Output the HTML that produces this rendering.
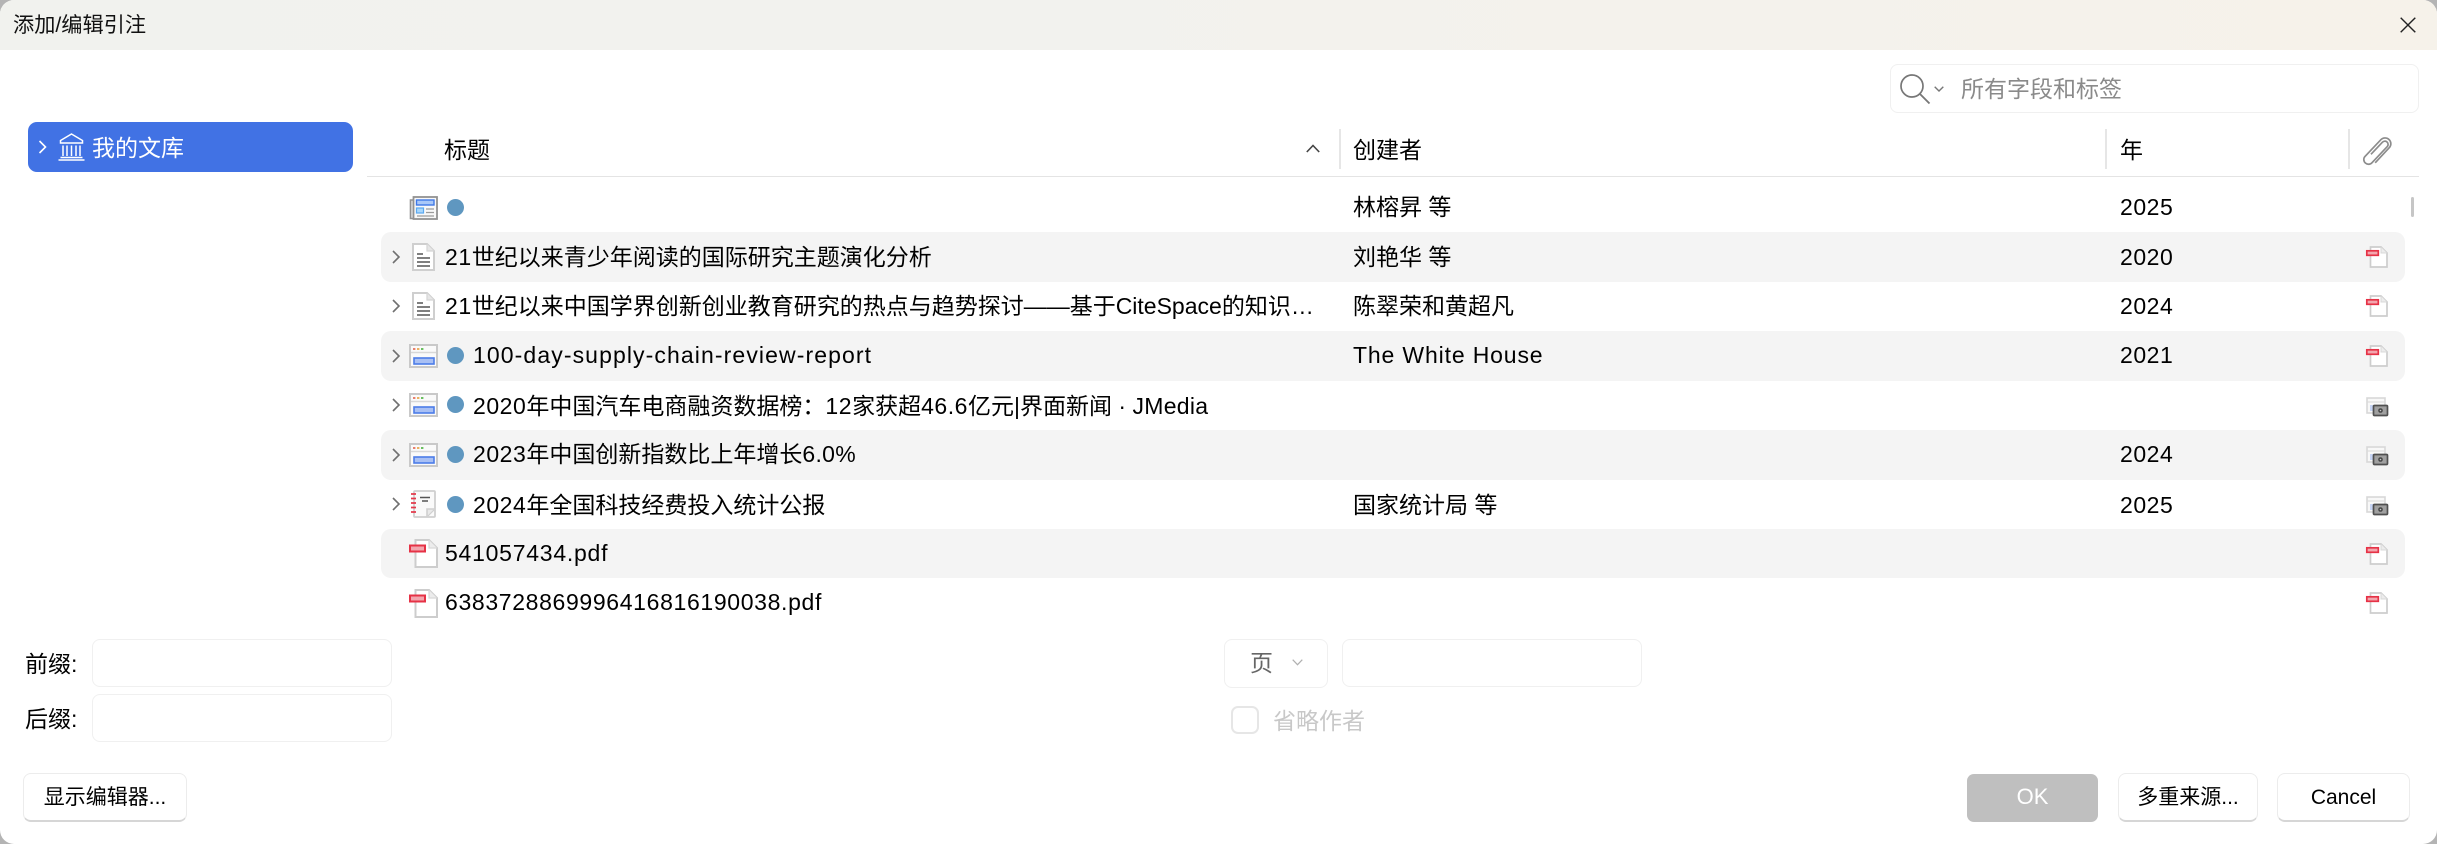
<!DOCTYPE html>
<html lang="zh-CN">
<head>
<meta charset="utf-8">
<title>添加/编辑引注</title>
<style>
html,body{margin:0;padding:0;width:2437px;height:844px;overflow:hidden;background:#b4b4b4}
body{font-family:"Liberation Sans","Noto Sans CJK SC",sans-serif;color:#000;font-size:23px}
#d{position:absolute;left:0;top:0;width:2437px;height:844px;background:#fff;border-radius:14px;overflow:hidden}
#tb{position:absolute;left:0;top:0;width:2437px;height:50px;background:linear-gradient(90deg,#f1f2ee,#f2f2ee 40%,#f6f2ea)}
.a{position:absolute;white-space:nowrap}
.t{position:absolute;white-space:nowrap;line-height:32px;height:32px}
i{font-style:normal;letter-spacing:.55px}
.box{position:absolute;box-sizing:border-box;border:1.5px solid #f0f0f0;border-radius:8px;background:#fff}
.btn{position:absolute;box-sizing:border-box;border:1px solid #ececec;border-bottom:2px solid #d6d6d6;border-radius:8px;background:#fff;font-size:21px;line-height:48px;height:49px;text-align:center;top:773px}
.row{position:absolute;left:381px;width:2024px;height:49.5px;border-radius:10px}
.hl{background:#f4f4f4}
.sep{position:absolute;top:129px;width:2px;height:40px;background:#e6e6e6}
svg{position:absolute;overflow:visible}
</style>
</head>
<body>
<svg width="0" height="0" style="position:absolute">
<defs>
<symbol id="chev" viewBox="0 0 8 14" overflow="visible"><path d="M1 1l6 6-6 6" fill="none" stroke="#707070" stroke-width="1.6"/></symbol>
<symbol id="doc" viewBox="0 0 23 28" overflow="visible"><path d="M1 1H15L22 8V27H1Z" fill="#fff" stroke="#cfcfcf" stroke-width="2"/><path d="M15 1V8H22" fill="#e6e6e6" stroke="#d4d4d4" stroke-width="1.2"/><path d="M5 11h6M5 15h13M5 19h13M5 23h13" stroke="#555" stroke-width="1.6"/></symbol>
<symbol id="web" viewBox="0 0 29 24" overflow="visible"><rect x="1" y="1" width="27" height="22" fill="#fafafa" stroke="#c9c9c9" stroke-width="2"/><path d="M2 8.500h25" stroke="#d8d8d8" stroke-width="1.500"/><rect x="4" y="4" width="2.400" height="2" fill="#e88070"/><rect x="8" y="4" width="2.400" height="2" fill="#eab060"/><rect x="12" y="4" width="2.400" height="2" fill="#6ac060"/><rect x="5" y="14" width="20" height="6" fill="#a9c0f4" stroke="#4c7ce8" stroke-width="1.600"/></symbol>
<symbol id="news" viewBox="0 0 29 24" overflow="visible"><path d="M5 4H1.500V22.500H5" fill="#e6e6e6" stroke="#929292" stroke-width="1.600"/><rect x="4.500" y="1" width="23.500" height="22" fill="#f8f8f8" stroke="#929292" stroke-width="1.800"/><rect x="7.500" y="4" width="17.500" height="5" fill="#a9c8f8" stroke="#3f78e6" stroke-width="1.400"/><rect x="7.500" y="12" width="7" height="5" fill="#a8d6fb" stroke="#5aa8f0" stroke-width="1.200"/><path d="M17 13h8M17 16.500h8M8 20h17" stroke="#9a9a9a" stroke-width="1.300"/></symbol>
<symbol id="note" viewBox="0 0 25 28" overflow="visible"><rect x="3" y="1" width="21" height="26" rx="1" fill="#fafafa" stroke="#cfcfcf" stroke-width="1.800"/><path d="M0 4h5M0 8.500h5M0 13h5M0 17.500h5M0 22h5" stroke="#e43a4c" stroke-width="1.800"/><path d="M9 7.500h10M11 11h6" stroke="#555" stroke-width="1.600"/><path d="M16 27V19H24" fill="#e9e9e9" stroke="#cfcfcf" stroke-width="1.600"/><path d="M17 26l6-6" stroke="#cfcfcf" stroke-width="1.200"/></symbol>
<symbol id="pdf" viewBox="0 0 29 29" overflow="visible"><path d="M6.500 1H20L28 9V28H6.500Z" fill="#fff" stroke="#cdcdcd" stroke-width="2"/><path d="M20 1V9H28" fill="#ececec" stroke="#d8d8d8" stroke-width="1.200"/><rect x="1" y="6.500" width="15" height="6" fill="#f2a6ae" stroke="#e63246" stroke-width="2"/></symbol>
<symbol id="apdf" viewBox="0 0 22 22" overflow="visible"><path d="M4.500 1H15L21 7V21H4.500Z" fill="#fff" stroke="#cdcdcd" stroke-width="1.700"/><path d="M15 1V7H21" fill="#ececec" stroke="#d8d8d8" stroke-width="1"/><rect x=".8" y="4.800" width="11.500" height="4.500" fill="#f2a6ae" stroke="#e63246" stroke-width="1.700"/></symbol>
<symbol id="snap" viewBox="0 0 22 20" overflow="visible"><rect x="1" y="1" width="18" height="15" fill="#f8f8f8" stroke="#d8d8d8" stroke-width="1.600"/><path d="M1.500 5h17" stroke="#dddddd" stroke-width="1.200"/><rect x="4" y="8" width="6" height="6" fill="#c6d4f4"/><rect x="7.500" y="8.500" width="14" height="10" rx="1" fill="#a0a0a0" stroke="#505050" stroke-width="1.700"/><circle cx="14.500" cy="13.500" r="2.300" fill="#444"/><circle cx="14.500" cy="13.500" r=".8" fill="#ccc"/></symbol>
</defs>
</svg>

<div id="d">
<div id="tb"></div>
<div class="t" style="left:13px;top:10px;font-size:21.2px;color:#111">添加/编辑引注</div>
<svg style="left:2400px;top:17px" width="16" height="16" viewBox="0 0 16 16"><path d="M.7.7l14.600 14.600M15.300.7L.7 15.300" stroke="#222" stroke-width="1.400" fill="none"/></svg>

<!-- search -->
<div class="box" style="left:1890px;top:64px;width:529px;height:49px"></div>
<svg style="left:1900px;top:74px" width="31" height="30" viewBox="0 0 31 30"><circle cx="12" cy="12" r="11" fill="none" stroke="#777" stroke-width="1.700"/><path d="M20 20l9.500 9.500" stroke="#777" stroke-width="1.900" fill="none"/></svg>
<svg style="left:1934px;top:86px" width="10" height="6" viewBox="0 0 10 6"><path d="M.7.7l4.300 4.300 4.300-4.300" stroke="#777" stroke-width="1.400" fill="none"/></svg>
<div class="t" style="left:1961px;top:73px;color:#8a8a8a">所有字段和标签</div>

<!-- sidebar -->
<div class="a" style="left:28px;top:122px;width:325px;height:50px;background:#4172e4;border-radius:9px"></div>
<svg style="left:38px;top:140px" width="9" height="14" viewBox="0 0 9 14"><path d="M1.500 1l6 6-6 6" fill="none" stroke="#fff" stroke-width="1.600"/></svg>
<svg style="left:58px;top:133px" width="27" height="28" viewBox="0 0 27 28"><path d="M13.500 1L24.500 7.500V10H2.500V7.500Z" fill="none" stroke="#fff" stroke-width="1.500"/><path d="M5 12.500V23M9 12.500V23M13.500 12.500V23M18 12.500V23M22 12.500V23" stroke="#fff" stroke-width="1.500" fill="none"/><path d="M2.500 24.500H24.500M.5 27H26.500" stroke="#fff" stroke-width="1.500"/></svg>
<div class="t" style="left:92px;top:132px;color:#fff">我的文库</div>

<!-- header -->
<div class="t" style="left:444px;top:134px">标题</div>
<svg style="left:1306px;top:144px" width="14" height="9" viewBox="0 0 14 9"><path d="M.8 8L7 1.500 13.200 8" fill="none" stroke="#444" stroke-width="1.600"/></svg>
<div class="sep" style="left:1339px"></div>
<div class="t" style="left:1353px;top:134px">创建者</div>
<div class="sep" style="left:2105px"></div>
<div class="t" style="left:2120px;top:134px">年</div>
<div class="sep" style="left:2348px"></div>
<svg style="left:2363px;top:138px" width="28" height="26" viewBox="2.500 2 22 21.500"><path d="M8.500 15.500L18 5.500a2.600 2.600 0 0 1 4 3.600L9.500 22.300a3.900 3.900 0 0 1-6-5L16.800 3.300a4.800 4.800 0 0 1 7.200 6.300L12 22.500" fill="none" stroke="#8c8c8c" stroke-width="1.400"/></svg>
<div class="a" style="left:367px;top:175.500px;width:2052px;height:1.500px;background:#e4e4e4"></div>
<div class="a" style="left:2411px;top:197px;width:3px;height:20px;background:#c6c6c6;border-radius:2px"></div>

<!-- rows -->
<div class="row hl" style="top:232.400px"></div>
<div class="row hl" style="top:331.200px"></div>
<div class="row hl" style="top:430px"></div>
<div class="row hl" style="top:528.800px"></div>

<!-- row 0 -->
<svg style="left:409px;top:196px" width="29" height="24"><use href="#news"/></svg>
<svg style="left:447px;top:199px" width="17" height="17"><circle cx="8.500" cy="8.500" r="8.500" fill="#5f97c0"/></svg>
<div class="t" style="left:1353px;top:191px">林榕昇 等</div>
<div class="t" style="left:2120px;top:191px"><i>2025</i></div>

<!-- row 1 -->
<svg style="left:391.500px;top:250px" width="8" height="14"><use href="#chev"/></svg>
<svg style="left:412px;top:243px" width="23" height="28"><use href="#doc"/></svg>
<div class="t" style="left:445px;top:241px"><i>21</i>世纪以来青少年阅读的国际研究主题演化分析</div>
<div class="t" style="left:1353px;top:241px">刘艳华 等</div>
<div class="t" style="left:2120px;top:241px"><i>2020</i></div>
<svg style="left:2366px;top:246px" width="22" height="22"><use href="#apdf"/></svg>

<!-- row 2 -->
<svg style="left:391.500px;top:299px" width="8" height="14"><use href="#chev"/></svg>
<svg style="left:412px;top:292px" width="23" height="28"><use href="#doc"/></svg>
<div class="t" style="left:445px;top:290px"><i>21</i>世纪以来中国学界创新创业教育研究的热点与趋势探讨——基于<i style="letter-spacing:0">CiteSpace</i>的知识…</div>
<div class="t" style="left:1353px;top:290px">陈翠荣和黄超凡</div>
<div class="t" style="left:2120px;top:290px"><i>2024</i></div>
<svg style="left:2366px;top:295px" width="22" height="22"><use href="#apdf"/></svg>

<!-- row 3 -->
<svg style="left:391.500px;top:349px" width="8" height="14"><use href="#chev"/></svg>
<svg style="left:409px;top:344px" width="29" height="24"><use href="#web"/></svg>
<svg style="left:447px;top:347px" width="17" height="17"><circle cx="8.500" cy="8.500" r="8.500" fill="#5f97c0"/></svg>
<div class="t" style="left:473px;top:339px"><i style="letter-spacing:1.1px">100-day-supply-chain-review-report</i></div>
<div class="t" style="left:1353px;top:339px"><i style="letter-spacing:.85px">The White House</i></div>
<div class="t" style="left:2120px;top:339px"><i>2021</i></div>
<svg style="left:2366px;top:345px" width="22" height="22"><use href="#apdf"/></svg>

<!-- row 4 -->
<svg style="left:391.500px;top:398px" width="8" height="14"><use href="#chev"/></svg>
<svg style="left:409px;top:393px" width="29" height="24"><use href="#web"/></svg>
<svg style="left:447px;top:396px" width="17" height="17"><circle cx="8.500" cy="8.500" r="8.500" fill="#5f97c0"/></svg>
<div class="t" style="left:473px;top:390px"><i>2020</i>年中国汽车电商融资数据榜：<i>12</i>家获超<i>46.6</i>亿元|界面新闻 · <i style="letter-spacing:.3px">JMedia</i></div>
<svg style="left:2366px;top:397px" width="22" height="20"><use href="#snap"/></svg>

<!-- row 5 -->
<svg style="left:391.500px;top:448px" width="8" height="14"><use href="#chev"/></svg>
<svg style="left:409px;top:443px" width="29" height="24"><use href="#web"/></svg>
<svg style="left:447px;top:446px" width="17" height="17"><circle cx="8.500" cy="8.500" r="8.500" fill="#5f97c0"/></svg>
<div class="t" style="left:473px;top:438px"><i>2023</i>年中国创新指数比上年增长<i style="letter-spacing:.3px">6.0%</i></div>
<div class="t" style="left:2120px;top:438px"><i>2024</i></div>
<svg style="left:2366px;top:446px" width="22" height="20"><use href="#snap"/></svg>

<!-- row 6 -->
<svg style="left:391.500px;top:497px" width="8" height="14"><use href="#chev"/></svg>
<svg style="left:411px;top:490px" width="25" height="28"><use href="#note"/></svg>
<svg style="left:447px;top:496px" width="17" height="17"><circle cx="8.500" cy="8.500" r="8.500" fill="#5f97c0"/></svg>
<div class="t" style="left:473px;top:489px"><i>2024</i>年全国科技经费投入统计公报</div>
<div class="t" style="left:1353px;top:489px">国家统计局 等</div>
<div class="t" style="left:2120px;top:489px"><i>2025</i></div>
<svg style="left:2366px;top:496px" width="22" height="20"><use href="#snap"/></svg>

<!-- row 7 -->
<svg style="left:409px;top:539px" width="29" height="29"><use href="#pdf"/></svg>
<div class="t" style="left:445px;top:537px"><i style="letter-spacing:.75px">541057434.pdf</i></div>
<svg style="left:2366px;top:543px" width="22" height="22"><use href="#apdf"/></svg>

<!-- row 8 -->
<svg style="left:409px;top:589px" width="29" height="29"><use href="#pdf"/></svg>
<div class="t" style="left:445px;top:586px"><i style="letter-spacing:.65px">6383728869996416816190038.pdf</i></div>
<svg style="left:2366px;top:592px" width="22" height="22"><use href="#apdf"/></svg>

<!-- bottom form -->
<div class="t" style="left:25px;top:648px">前缀:</div>
<div class="box" style="left:92px;top:639px;width:300px;height:48px"></div>
<div class="t" style="left:25px;top:703px">后缀:</div>
<div class="box" style="left:92px;top:694px;width:300px;height:48px"></div>

<div class="box" style="left:1224px;top:639px;width:104px;height:49px"></div>
<div class="t" style="left:1250px;top:647px;color:#666">页</div>
<svg style="left:1292px;top:659px" width="11" height="7" viewBox="0 0 11 7"><path d="M.7.7l4.800 5 4.800-5" fill="none" stroke="#b0b0b0" stroke-width="1.200"/></svg>
<div class="box" style="left:1342px;top:639px;width:300px;height:48px"></div>
<div class="a" style="left:1231px;top:706px;width:28px;height:28px;box-sizing:border-box;border:2px solid #e6e6e6;border-radius:7px;background:#fff"></div>
<div class="t" style="left:1273px;top:705px;color:#c8c8c8">省略作者</div>

<div class="btn" style="left:23px;width:164px">显示编辑器...</div>
<div class="a" style="left:1967px;top:774px;width:131px;height:48px;background:#bfbfbf;border-radius:7px;color:#fff;font-size:22px;line-height:46px;text-align:center">OK</div>
<div class="btn" style="left:2118px;width:140px">多重来源...</div>
<div class="btn" style="left:2277px;width:133px">Cancel</div>
</div>
</body>
</html>
